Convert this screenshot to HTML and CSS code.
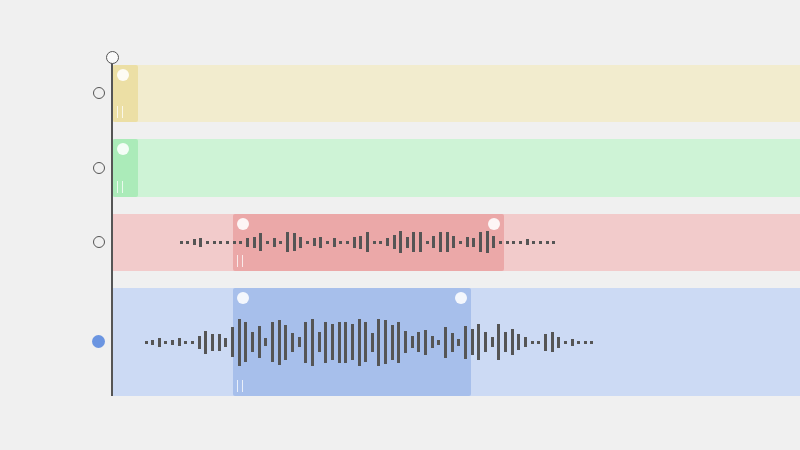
FILE: index.html
```html
<!DOCTYPE html>
<html>
<head>
<meta charset="utf-8">
<link rel="stylesheet" href="styles.css">
</head>
<body>
<div class="board">
  <div class="radios">
    <div class="radio-cell"><span class="radio"></span></div>
    <div class="radio-cell"><span class="radio"></span></div>
    <div class="radio-cell"><span class="radio"></span></div>
    <div class="radio-cell tall"><span class="radio on"></span></div>
  </div>
  <div class="stack">
    <div class="playhead"></div>
    <div class="lanes">
      <div class="lane yellow">
        <div class="sel sel-start"><span class="dot l"></span><span class="grip"></span></div>
      </div>
      <div class="lane green">
        <div class="sel sel-start"><span class="dot l"></span><span class="grip"></span></div>
      </div>
      <div class="lane red">
        <div class="sel sel-red"><span class="dot l"></span><span class="dot r"></span><span class="grip"></span></div>
        <div class="wave wave-red">
          <i style="height:3px"></i><i style="height:3px"></i><i style="height:6px"></i><i style="height:9px"></i><i style="height:3px"></i><i style="height:3px"></i><i style="height:3px"></i><i style="height:3px"></i><i style="height:3px"></i><i style="height:3px"></i>
          <i style="height:9px"></i><i style="height:11px"></i><i style="height:18px"></i><i style="height:3px"></i><i style="height:9px"></i><i style="height:3px"></i><i style="height:20px"></i><i style="height:18px"></i><i style="height:11px"></i><i style="height:3px"></i>
          <i style="height:8px"></i><i style="height:11px"></i><i style="height:3px"></i><i style="height:9px"></i><i style="height:3px"></i><i style="height:3px"></i><i style="height:11px"></i><i style="height:13px"></i><i style="height:20px"></i><i style="height:3px"></i>
          <i style="height:3px"></i><i style="height:8px"></i><i style="height:14px"></i><i style="height:22px"></i><i style="height:11px"></i><i style="height:20px"></i><i style="height:20px"></i><i style="height:3px"></i><i style="height:12px"></i><i style="height:20px"></i>
          <i style="height:20px"></i><i style="height:12px"></i><i style="height:3px"></i><i style="height:10px"></i><i style="height:9px"></i><i style="height:20px"></i><i style="height:22px"></i><i style="height:12px"></i><i style="height:3px"></i><i style="height:3px"></i>
          <i style="height:3px"></i><i style="height:3px"></i><i style="height:6px"></i><i style="height:3px"></i><i style="height:3px"></i><i style="height:3px"></i><i style="height:3px"></i>
        </div>
      </div>
      <div class="lane blue tall">
        <div class="sel sel-blue"><span class="dot l"></span><span class="dot r"></span><span class="grip"></span></div>
        <div class="wave wave-blue">
          <i style="height:3px"></i><i style="height:5px"></i><i style="height:9px"></i><i style="height:3px"></i><i style="height:5px"></i><i style="height:8px"></i><i style="height:3px"></i><i style="height:3px"></i><i style="height:13px"></i><i style="height:23px"></i>
          <i style="height:17px"></i><i style="height:17px"></i><i style="height:9px"></i><i style="height:30px"></i><i style="height:47px"></i><i style="height:40px"></i><i style="height:20px"></i><i style="height:32px"></i><i style="height:8px"></i><i style="height:40px"></i>
          <i style="height:45px"></i><i style="height:35px"></i><i style="height:19px"></i><i style="height:10px"></i><i style="height:41px"></i><i style="height:47px"></i><i style="height:20px"></i><i style="height:41px"></i><i style="height:36px"></i><i style="height:41px"></i>
          <i style="height:41px"></i><i style="height:36px"></i><i style="height:47px"></i><i style="height:40px"></i><i style="height:19px"></i><i style="height:47px"></i><i style="height:44px"></i><i style="height:35px"></i><i style="height:41px"></i><i style="height:22px"></i>
          <i style="height:12px"></i><i style="height:20px"></i><i style="height:25px"></i><i style="height:12px"></i><i style="height:5px"></i><i style="height:31px"></i><i style="height:19px"></i><i style="height:7px"></i><i style="height:33px"></i><i style="height:26px"></i>
          <i style="height:36px"></i><i style="height:20px"></i><i style="height:10px"></i><i style="height:36px"></i><i style="height:20px"></i><i style="height:26px"></i><i style="height:16px"></i><i style="height:10px"></i><i style="height:3px"></i><i style="height:3px"></i>
          <i style="height:17px"></i><i style="height:20px"></i><i style="height:11px"></i><i style="height:3px"></i><i style="height:7px"></i><i style="height:3px"></i><i style="height:3px"></i><i style="height:3px"></i>
        </div>
      </div>
    </div>
  </div>
</div>
</body>
</html>
```
FILE: styles.css
```css
* { box-sizing: border-box; }
html, body { margin: 0; padding: 0; }
body {
  width: 800px;
  height: 450px;
  overflow: hidden;
  background: #f0f0f0;
  font-family: "Liberation Sans", sans-serif;
}
.board {
  display: flex;
  align-items: flex-start;
  padding: 57px 0 0 92.5px;
}
.radios {
  flex: none;
  width: 18.5px;
  display: flex;
  flex-direction: column;
  gap: 17px;
  padding-top: 7.5px;
}
.radio-cell {
  height: 57.5px;
  display: flex;
  align-items: center;
}
.radio-cell.tall { height: 107.5px; }
.radio {
  display: block;
  width: 12px;
  height: 12px;
  border: 1.2px solid #555;
  border-radius: 50%;
}
.radio.on {
  width: 13px;
  height: 13px;
  margin-left: -0.5px;
  border: none;
  background: #6b95e1;
}
.stack {
  flex: 1;
  display: flex;
  flex-direction: column;
  border-left: 2px solid #555;
}
.playhead {
  align-self: flex-start;
  position: relative;
  z-index: 2;
  width: 13px;
  height: 13px;
  margin: -6.5px 0 0 -7.5px;
  border: 1.5px solid #555;
  border-radius: 50%;
  background: #fafafa;
}
.lanes {
  display: flex;
  flex-direction: column;
  gap: 17px;
  margin-top: 1px;
}
.lane {
  position: relative;
  height: 57.5px;
  display: flex;
  align-items: center;
}
.lane.tall { height: 107.5px; }
.yellow { background: #f2ecce; }
.yellow .sel { background: #ecdfa5; }
.green { background: #cef3d6; }
.green .sel { background: #abebb9; }
.red { background: #f2cbcb; }
.red .sel { background: #eba8a8; }
.blue { background: #ccdaf4; }
.blue .sel { background: #a7bfeb; }
.sel {
  position: absolute;
  top: 0;
  bottom: 0;
  border-radius: 2px;
}
.sel-start { left: 0; width: 25px; }
.sel-red { left: 120px; width: 271px; }
.sel-blue { left: 120px; width: 238px; }
.dot {
  position: absolute;
  top: 4px;
  width: 12px;
  height: 12px;
  border-radius: 50%;
  background: rgba(255, 255, 255, 0.88);
}
.dot.l { left: 4px; }
.dot.r { right: 4px; }
.grip {
  position: absolute;
  left: 4px;
  bottom: 4px;
  width: 5.5px;
  height: 12px;
  border-left: 1.5px solid rgba(255, 255, 255, 0.75);
  border-right: 1.5px solid rgba(255, 255, 255, 0.75);
}
.wave {
  position: relative;
  z-index: 1;
  display: flex;
  align-items: center;
  gap: 3.6667px;
}
.wave i {
  display: block;
  flex: none;
  width: 3px;
  background: #555;
}
.wave-red { margin-left: 66.5px; }
.wave-blue { margin-left: 31.5px; margin-top: 1px; }
```
